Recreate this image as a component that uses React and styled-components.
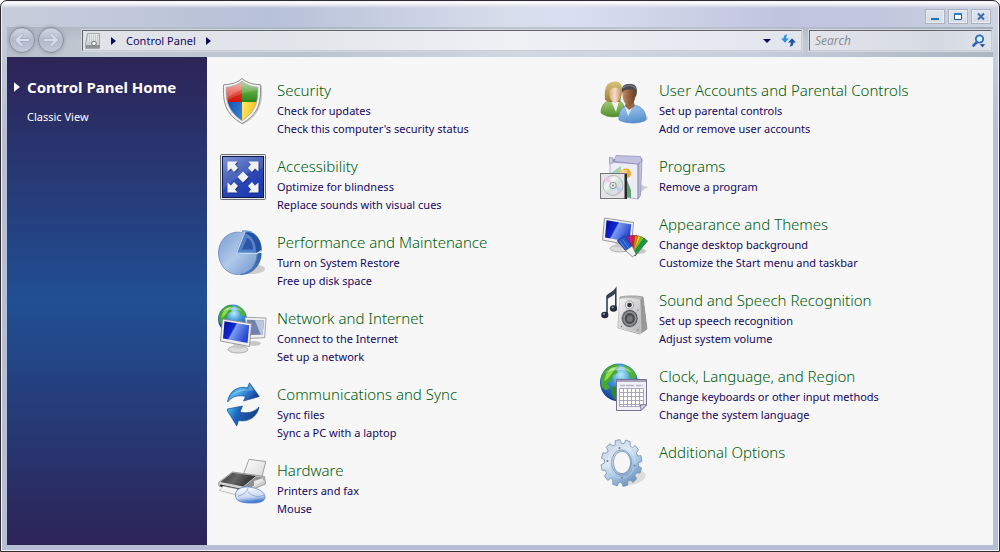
import styled, { createGlobalStyle, css } from 'styled-components';

const GlobalStyle = createGlobalStyle`
  * {
    box-sizing: border-box;
  }

  body {
    margin: 0;
    background: #fff;
    font-family: 'Noto Sans', 'Open Sans', sans-serif;
    font-size: 11px;
    color: #16085f;
  }

  a {
    color: inherit;
    text-decoration: none;
  }

  a:hover {
    text-decoration: underline;
  }

  button {
    padding: 0;
    border: none;
    background: none;
    font: inherit;
    color: inherit;
  }

  svg {
    display: block;
    flex: none;
  }
`;

//! Window frame
const Window = styled.div`
  min-height: 100vh;
  display: flex;
  flex-direction: column;
  padding: 0 6px 6px;
  border: 1px solid #2f2b30;
  border-radius: 7px 7px 0 0;
  box-shadow: inset 0 0 0 1px #f1f2f8;
  background:
    linear-gradient(#fff 1px, #e8e9f2 4px, rgba(232, 233, 242, 0) 7px),
    linear-gradient(rgba(181, 190, 212, 0) 26px, #b5bed4 130px),
    linear-gradient(
      90deg,
      #c8cddb,
      #b7c1d8 27%,
      #d6dcea 50%,
      #d9dff0 57%,
      #c1c4de 78%,
      #c2c6de 88%,
      #ccd5e2
    );
`;

const TitleBar = styled.header`
  display: flex;
  justify-content: flex-end;
  gap: 3px;
  height: 26px;
  padding: 8px 2px 0;
`;

const WindowButton = styled.button`
  display: flex;
  align-items: center;
  justify-content: center;
  width: 20px;
  height: 15px;
  border: 1px solid #abb1bf;
  background: linear-gradient(#dfe3ec, #d5dbe6);
  box-shadow: inset 0 0 0 1px #e9edf3;
`;

//! Navigation bar
const NavBar = styled.div`
  display: flex;
  align-items: flex-start;
  height: 30px;
  padding: 3px 1px 0 0;
  background:
    linear-gradient(rgba(150, 160, 175, 0.35), rgba(255, 255, 255, 0) 14px),
    linear-gradient(
      90deg,
      #b6bec9,
      #c2cad4 10%,
      #b9c3d0 30%,
      #d2d8e2 52%,
      #c9cede 75%,
      #abb5c2
    );
`;

const HistoryButtons = styled.div`
  display: flex;
  gap: 3px;
  width: 75px;
  margin-top: -3px;
  padding-left: 2px;
`;

const RoundButton = styled.button`
  display: flex;
  align-items: center;
  justify-content: center;
  width: 26px;
  height: 26px;
  border: 1px solid #858d9d;
  border-radius: 50%;
  background: linear-gradient(#d3d8e3, #b1b9cb 50%, #c3cad8);
  box-shadow:
    inset 0 0 0 1px #bdc5d5,
    0 0 3px 1px #a2a9b5;
`;

const field = css`
  display: flex;
  align-items: center;
  height: 21px;
  border: 1px solid;
  border-color: #62656c #c6cbd4 #c6cbd4 #62656c;
  outline: 1px solid #d3d8df;
`;

const AddressBar = styled.nav`
  ${field}
  flex: 1;
  gap: 10px;
  padding: 0 5px 0 2px;
  margin-right: 7px;
  background: linear-gradient(90deg, #dfe2e8, #e2e5ea 30%, #eff1f5 60%, #e2e5ec);
`;

const Spacer = styled.span`
  flex: 1;
`;

const Crumb = styled.a`
  line-height: 18px;
`;

const SearchBox = styled.form`
  ${field}
  width: 183px;
  padding: 0 5px;
  background: linear-gradient(90deg, #e3e5eb, #d6dae2 70%, #dde4ea);
`;

const SearchInput = styled.input`
  flex: 1;
  min-width: 0;
  padding: 0;
  border: none;
  outline: none;
  background: none;
  font: italic 12px 'Open Sans', sans-serif;
  color: #16085f;

  &::placeholder {
    color: #85888e;
    opacity: 1;
  }
`;

//! Body
const Body = styled.div`
  flex: 1;
  display: flex;
  background: #f7f7f7;
`;

const Sidebar = styled.aside`
  width: 200px;
  padding: 19px 7px;
  background: linear-gradient(#2d2457, #204f94 50%, #2d2457);
  color: #fff;
`;

const SideLink = styled.a`
  display: flex;
  align-items: center;
  gap: 7px;
  padding-left: ${(p) => (p.$current ? 0 : 13)}px;
  margin-bottom: 10px;
  font-size: ${(p) => (p.$current ? 15 : 11)}px;
  font-weight: ${(p) => (p.$current ? 700 : 400)};
  line-height: ${(p) => (p.$current ? 22 : 18)}px;
`;

const Main = styled.main`
  flex: 1;
  display: grid;
  grid-template-columns: repeat(2, minmax(0, 1fr));
  align-items: start;
  padding: 21px 11px 4px;
`;

const Column = styled.div`
  display: flex;
  flex-direction: column;
  gap: 10px;
`;

const CategoryRow = styled.section`
  display: flex;
  gap: 11px;
`;

const CategoryText = styled.div`
  min-width: 0;
  padding-bottom: 6px;
`;

const CategoryTitle = styled.h2`
  margin: 0;
  font-size: 15px;
  font-weight: 300;
  line-height: 24px;
  color: #005c0c;
`;

const TaskList = styled.ul`
  margin: 0;
  padding: 0;
  list-style: none;
  line-height: 18px;
`;

//! Icons
const IconFrame = ({ children }) => (
  <svg width="48" height="48" viewBox="0 0 48 48" overflow="visible" aria-hidden="true">
    {children}
  </svg>
);

const shieldPath = 'M24 3.2C19.500 7 14 9 8.200 9.200C7.600 22 9.500 33 24 42.800C38.500 33 40.400 22 39.800 9.200C34 9 28.500 7 24 3.200Z';

const ShieldIcon = () => (
  <IconFrame>
    <defs>
      <clipPath id="shieldClip">
        <path d={shieldPath} />
      </clipPath>
      <linearGradient id="shRed" x1="0" y1="0" x2="0" y2="1">
        <stop offset="0" stopColor="#f0a39b" />
        <stop offset="0.6" stopColor="#dd3324" />
        <stop offset="1" stopColor="#cf1208" />
      </linearGradient>
      <linearGradient id="shGreen" x1="0" y1="0" x2="0" y2="1">
        <stop offset="0" stopColor="#bfdcae" />
        <stop offset="0.5" stopColor="#5cab40" />
        <stop offset="1" stopColor="#2c8417" />
      </linearGradient>
      <linearGradient id="shBlue" x1="0" y1="0" x2="1" y2="0.5">
        <stop offset="0" stopColor="#1548a0" />
        <stop offset="1" stopColor="#2f7fd6" />
      </linearGradient>
      <linearGradient id="shYellow" x1="0" y1="0" x2="1" y2="0.3">
        <stop offset="0" stopColor="#ffe96a" />
        <stop offset="1" stopColor="#f3b70c" />
      </linearGradient>
    </defs>
    <path d="M25 1C20 5.500 13 7 6 7.500C5 23 7 37 25 46.500C43 37 45 23 44 7.500C37 7 30 5.500 25 1Z" fill="#000" opacity="0.18" />
    <path
      d="M24 0.500C19 5 12.500 6.500 5.700 6.700C4.500 23 7 36 24 45.500C41 36 43.500 23 42.300 6.700C35.500 6.500 29 5 24 0.500Z"
      fill="#f4f4f4"
      stroke="#8c8c8c"
    />
    <g clipPath="url(#shieldClip)">
      <path d="M5 2H24V24H5Z" fill="url(#shRed)" />
      <path d="M24 2H43V24H24Z" fill="url(#shGreen)" />
      <path d="M5 24H24V45H5Z" fill="url(#shBlue)" />
      <path d="M24 24H43V45H24Z" fill="url(#shYellow)" />
      <path d="M8 8L24 3V12C18 14 12 17 8 21Z" fill="#fff" opacity="0.3" />
      <path d="M8 20C14 15 24 13 24 12V3L40 8V12C30 14 16 16 8 24Z" fill="#fff" opacity="0.15" />
    </g>
    <path d={shieldPath} fill="none" stroke="#a8a8a8" strokeWidth="0.8" />
  </IconFrame>
);

const cornerArrow = 'M-15.500 -15.500H-5.500L-8 -12.500L-5 -9L-9 -5L-12 -8.500L-15.500 -5.500Z';

const AccessIcon = () => (
  <IconFrame>
    <defs>
      <linearGradient id="accBg" x1="0" y1="0" x2="0.600" y2="1">
        <stop offset="0" stopColor="#7089cf" />
        <stop offset="0.45" stopColor="#3452b2" />
        <stop offset="1" stopColor="#1c39b4" />
      </linearGradient>
    </defs>
    <rect x="2.500" y="0.500" width="45" height="45" rx="1" fill="#e6e6ea" stroke="#6f7076" />
    <rect x="4.500" y="2.500" width="41" height="41" fill="url(#accBg)" stroke="#10194e" />
    <path d="M5 3H45V14C32 16 16 24 5 36Z" fill="#fff" opacity="0.12" />
    <g fill="#121d5c" opacity="0.5" transform="translate(26 24)">
      <path d={cornerArrow} />
      <path d={cornerArrow} transform="scale(-1 1)" />
      <path d={cornerArrow} transform="scale(1 -1)" />
      <path d={cornerArrow} transform="scale(-1 -1)" />
      <path d="M0 -5.500L5.500 0L0 5.500L-5.500 0Z" />
    </g>
    <g fill="#f1f0f3" transform="translate(25 23)">
      <path d={cornerArrow} />
      <path d={cornerArrow} transform="scale(-1 1)" />
      <path d={cornerArrow} transform="scale(1 -1)" />
      <path d={cornerArrow} transform="scale(-1 -1)" />
      <path d="M0 -5.500L5.500 0L0 5.500L-5.500 0Z" />
    </g>
  </IconFrame>
);

const PieIcon = () => (
  <IconFrame>
    <defs>
      <linearGradient id="pieFace" x1="0" y1="0" x2="1" y2="1">
        <stop offset="0" stopColor="#7a9cd0" />
        <stop offset="0.5" stopColor="#b0c9ea" />
        <stop offset="1" stopColor="#6e94cd" />
      </linearGradient>
      <linearGradient id="pieSide" x1="0" y1="0" x2="0" y2="1">
        <stop offset="0" stopColor="#3263ae" />
        <stop offset="1" stopColor="#4a76b8" />
      </linearGradient>
    </defs>
    <ellipse cx="33" cy="39" rx="14" ry="5" fill="#555" opacity="0.25" />
    <path d="M18 23H43.500C44 34 35 45 22 45Z" fill="url(#pieSide)" />
    <path
      d="M18 23L26 3C11 -1 0.500 10 0.500 23C0.500 35 9 44.500 20 44.500C31 44.500 39 35 39 24Z"
      fill="url(#pieFace)"
      stroke="#5b83bf"
      strokeWidth="0.7"
    />
    <path d="M26 3L30 1C39 3 44 11 43.800 21L39 24L18 23.500Z" fill="#3565b4" />
    <path d="M20 22L28 3.500C35 6 38 12 38.500 22Z" fill="#5583cb" />
    <path d="M24 19.500L29 8C33 10 35 14 35 19.500Z" fill="#2b57a6" />
    <path d="M38 22C38 13 35 7 28.500 3.500L32 2C39 5 43 12 43 20.500Z" fill="#2450a0" />
    <path d="M24 1.300C28 0.500 31 1 34 2.500" fill="none" stroke="#6f97d4" strokeWidth="1.500" />
    <path d="M26.500 3L18.500 23L39 23.500L43.500 20.500" fill="none" stroke="#c6dcf6" strokeWidth="1.300" />
  </IconFrame>
);

const Globe = ({ id }) => (
  <>
    <defs>
      <radialGradient id={id} cx="0.550" cy="0.300" r="0.700">
        <stop offset="0" stopColor="#b8ecfb" />
        <stop offset="0.400" stopColor="#3f95d8" />
        <stop offset="1" stopColor="#123f96" />
      </radialGradient>
    </defs>
    <circle r="19" fill={`url(#${id})`} />
    <path d="M-15 -11C-11 -17 -6 -18 -2 -18.500L1 -15L-3 -13L-1 -10L-6 -7L-7 -2L-12 1L-9 5L-13 8L-17 5C-19 -1 -18 -6 -15 -11Z" fill="#46a832" />
    <path d="M-13 -8L-8 -14L-3 -15L-7 -9L-11 -4L-15 -1Z" fill="#8edb52" />
    <path d="M5 -17.500C10 -17 15 -12 17.500 -7L15 -3L11 -5L9 -10L6 -12Z" fill="#4eb13a" />
    <path d="M-7 5L0 3L7 8L5 14L0 18.500C-4 18 -6 15 -7 12Z" fill="#2b8a2a" />
    <path d="M-14 -9C-8 -18 6 -19 13 -10C6 -13 -6 -14 -14 -9Z" fill="#fff" opacity="0.4" />
  </>
);

const Monitor = ({ id }) => (
  <>
    <defs>
      <linearGradient id={id} x1="0" y1="0" x2="1" y2="0.450">
        <stop offset="0" stopColor="#060c86" />
        <stop offset="0.450" stopColor="#1029d8" />
        <stop offset="0.500" stopColor="#7d9cf0" />
        <stop offset="1" stopColor="#2747d4" />
      </linearGradient>
    </defs>
    <ellipse cx="18" cy="31" rx="10" ry="3.500" fill="#dcdcdc" stroke="#a3a3a3" strokeWidth="0.800" />
    <path d="M14 23L22 24L23 30H13Z" fill="#c9c9cb" />
    <path d="M2.500 0.500L31.500 5L29.500 28L0.500 22.500Z" fill="#efeff0" stroke="#8f9095" strokeWidth="0.900" />
    <path d="M4.500 2.800L29.200 6.700L27.600 24.500L3 20Z" fill={`url(#${id})`} />
  </>
);

const NetworkIcon = () => (
  <IconFrame>
    <g transform="translate(14.500 13) scale(0.760)">
      <Globe id="globeSmall" />
    </g>
    <g transform="translate(48 12) scale(-0.660 0.820)">
      <ellipse cx="18" cy="31" rx="10" ry="3" fill="#c8c8c8" />
      <path d="M0 0L32 -1L29 25L2 24Z" fill="#f0f0f2" stroke="#85868b" />
      <path d="M3 3L29 2L27 21L5 20Z" fill="#7183ad" />
      <path d="M3 3L17 2.500L8 20H5Z" fill="#b9c6e0" />
    </g>
    <g transform="translate(2 12.500)">
      <Monitor id="monitorNet" />
    </g>
  </IconFrame>
);

const SyncIcon = () => (
  <IconFrame>
    <defs>
      <linearGradient id="syncTop" x1="0" y1="0" x2="1" y2="0.500">
        <stop offset="0" stopColor="#2668ad" />
        <stop offset="0.450" stopColor="#4fb0ec" />
        <stop offset="0.700" stopColor="#2e7fd0" />
        <stop offset="1" stopColor="#103f9a" />
      </linearGradient>
      <linearGradient id="syncBottom" x1="0" y1="0" x2="1" y2="0.300">
        <stop offset="0" stopColor="#46c6f6" />
        <stop offset="0.400" stopColor="#1c62bb" />
        <stop offset="1" stopColor="#173f82" />
      </linearGradient>
    </defs>
    <g stroke="#1d4f97" strokeWidth="0.700" strokeLinejoin="round">
      <path d="M9.500 20C11 9 20 3.500 29.500 5.800L31.500 0.800L41.300 14.500L25.500 19L27.500 14.500C20 12.500 14 14.500 9.500 20Z" fill="url(#syncTop)" />
      <path d="M41 25C39.500 35 30 40.500 20.500 38.500L18.800 44L9.500 29L9.300 27L24.500 24L22 30C29 32 37 30 41 25Z" fill="url(#syncBottom)" />
    </g>
    <path d="M12 15C17 8 23 6.500 30.500 7.500L32 3.500L35.500 8.500C27 8 19 9 12 15Z" fill="#fff" opacity="0.25" />
  </IconFrame>
);

const PrinterIcon = () => (
  <IconFrame>
    <defs>
      <linearGradient id="prTop" x1="0" y1="0" x2="1" y2="0.300">
        <stop offset="0" stopColor="#333" />
        <stop offset="0.500" stopColor="#666" />
        <stop offset="1" stopColor="#2c2c2c" />
      </linearGradient>
      <linearGradient id="prPaper" x1="0" y1="0" x2="1" y2="1">
        <stop offset="0" stopColor="#fff" />
        <stop offset="1" stopColor="#d6d6d6" />
      </linearGradient>
      <linearGradient id="prMouse" x1="0" y1="0" x2="0.200" y2="1">
        <stop offset="0" stopColor="#ffffff" />
        <stop offset="0.700" stopColor="#c9d8f2" />
        <stop offset="1" stopColor="#3e78d2" />
      </linearGradient>
    </defs>
    <path d="M31 1.300L47.800 3.500L43.500 20L25.500 16Z" fill="url(#prPaper)" stroke="#8c8c8c" strokeWidth="0.800" />
    <path d="M0.500 24.500L14.500 14L46.500 18.500L47.500 26L26 35L1 28Z" fill="#d0d1d2" stroke="#77787a" strokeWidth="0.700" />
    <path d="M2.500 24L14.500 14.800L38 18L25 28.500Z" fill="url(#prTop)" />
    <path d="M25 29L38.500 18.500L45.500 19.500L46 21.500L29 31.500Z" fill="#8e9093" />
    <path d="M36 23L45 20V23L36 28Z" fill="#e6e6e6" />
    <path d="M2 26.500L24 31L23 33L2.500 28.500Z" fill="#1c1c1c" />
    <path d="M5 28L20 31L17 36.500L1.500 32.500Z" fill="#f5f5f5" stroke="#999" strokeWidth="0.600" />
    <path
      d="M17.500 37C17.500 31 24 28.500 31 29C40 30 47 34 47 39C47 44 40 45.500 32 45C23 45 17.500 43 17.500 37Z"
      fill="url(#prMouse)"
      stroke="#6186c4"
      strokeWidth="0.800"
    />
    <path d="M20 38C24 37 29 35 30 30M30 34C34 38 40 40 46 37" fill="none" stroke="#8ba2cd" strokeWidth="0.900" />
  </IconFrame>
);

const UsersIcon = () => (
  <IconFrame>
    <defs>
      <linearGradient id="usGreen" x1="0" y1="0" x2="0" y2="1">
        <stop offset="0" stopColor="#a9cd79" />
        <stop offset="1" stopColor="#4f8f2c" />
      </linearGradient>
      <linearGradient id="usBlue" x1="0" y1="0" x2="0.300" y2="1">
        <stop offset="0" stopColor="#a8cdf0" />
        <stop offset="1" stopColor="#5a93d0" />
      </linearGradient>
      <linearGradient id="usHair" x1="0" y1="0" x2="0" y2="1">
        <stop offset="0" stopColor="#d9c47c" />
        <stop offset="1" stopColor="#9a7c30" />
      </linearGradient>
      <linearGradient id="usFace" x1="0" y1="0" x2="1" y2="0">
        <stop offset="0" stopColor="#d9a982" />
        <stop offset="0.500" stopColor="#f6dcc6" />
        <stop offset="1" stopColor="#c99c77" />
      </linearGradient>
      <linearGradient id="usFaceDark" x1="0" y1="0" x2="1" y2="0">
        <stop offset="0" stopColor="#c48d66" />
        <stop offset="0.500" stopColor="#93603d" />
        <stop offset="1" stopColor="#6b4228" />
      </linearGradient>
    </defs>
    <ellipse cx="35" cy="40" rx="13" ry="5" fill="#666" opacity="0.25" />
    <path d="M1 35C1 27 5 23.500 11 22H18C23 24 25 28 25 36C18 40 7 40 1 35Z" fill="url(#usGreen)" stroke="#5e8c3b" strokeWidth="0.600" />
    <path d="M11 23L16 34L19 23Z" fill="#f3f3ee" />
    <path d="M5 22C5 16 3 4 15 3.500C21 3.500 23 8 22 15L20 24H9Z" fill="url(#usHair)" />
    <path d="M9 13C11 9 18 8 20.500 12C21 19 19 24 15 25C11 24 9 19 9 13Z" fill="url(#usFace)" />
    <path d="M19 42C18 33 22 29 28 27H35C42 29 46 33 46 42C40 46 26 46 19 42Z" fill="url(#usBlue)" stroke="#4c7db5" strokeWidth="0.600" />
    <path d="M25 28L28 38L33 28Z" fill="#e6f1fa" />
    <path d="M26 24H34L34.500 28.500L29 32L25 28Z" fill="#9a6742" />
    <path d="M22 14C21 8 25 5.500 30 6C36 5.500 38 10 36.500 17L34.500 20L24 16Z" fill="#4b4b4f" />
    <path d="M22.500 14C25 10.500 33 11 35.500 13C36 20 34 26 29.500 28C25 27 22 22 22.500 14Z" fill="url(#usFaceDark)" />
    <path d="M23 10C26 6.500 33 6.500 36 11" fill="none" stroke="#85858a" strokeWidth="1.200" />
  </IconFrame>
);

const ProgramsIcon = () => (
  <IconFrame>
    <defs>
      <linearGradient id="pgSide" x1="0" y1="0" x2="1" y2="0">
        <stop offset="0" stopColor="#a9a9cb" />
        <stop offset="1" stopColor="#d6d6ea" />
      </linearGradient>
      <linearGradient id="pgDisc" x1="0" y1="0" x2="1" y2="1">
        <stop offset="0" stopColor="#bdb7cf" />
        <stop offset="0.350" stopColor="#f6f6f6" />
        <stop offset="0.550" stopColor="#c9e2da" />
        <stop offset="0.750" stopColor="#ebd8ea" />
        <stop offset="1" stopColor="#a5adbb" />
      </linearGradient>
    </defs>
    <path d="M32 44L48 33L41 31Z" fill="#777" opacity="0.3" />
    <path d="M9.500 3L16 6L42 4L33 10L10 8Z" fill="#9d9dc4" />
    <path d="M10 8L38 10V45L10 41Z" fill="#ededf6" stroke="#9494bb" strokeWidth="0.700" />
    <path d="M38 10L42 4.500L40.500 41.500L38 45Z" fill="url(#pgSide)" stroke="#8787b2" strokeWidth="0.700" />
    <path d="M16 1.500L40.500 2.500L42 7L38 10L14 7.500Z" fill="#c2c2e0" stroke="#8a8ab4" strokeWidth="0.700" />
    <path d="M9.500 3L13 4V9L9.500 10Z" fill="#c7c7df" stroke="#8a8ab4" strokeWidth="0.500" />
    <path d="M11 19L21 12V20H11Z" fill="#a5d1b0" />
    <circle cx="26" cy="19.500" r="5" fill="#f0a928" />
    <path d="M20 16H27V24H20Z" fill="#f4cf86" />
    <path d="M27 26L31 36V44L27 43Z" fill="#5ba274" />
    <rect x="0.500" y="19.500" width="26" height="25" fill="#e4e4e6" stroke="#77777a" />
    <path d="M24.500 20H27V45H24.500Z" fill="#29292b" />
    <circle cx="13" cy="31.500" r="10" fill="url(#pgDisc)" stroke="#9a9a9e" strokeWidth="0.600" />
    <path d="M13 31.500L4.500 25L8 22.500Z" fill="#f1c9e6" />
    <path d="M13 31.500L22 34L20 39Z" fill="#b3d6ee" />
    <circle cx="13" cy="31.500" r="3.200" fill="#ececec" stroke="#88888c" strokeWidth="0.900" />
    <circle cx="13" cy="31.500" r="1" fill="#77777a" />
  </IconFrame>
);

const swatches = ['#1c2fa8', '#6a29a8', '#b01ca0', '#e0189a', '#e0202c', '#f07a1a', '#f2d31c', '#7ccf2a', '#169a3c'];

const ThemesIcon = () => (
  <IconFrame>
    <g transform="translate(2 5.500)">
      <Monitor id="monitorTheme" />
    </g>
    <ellipse cx="38" cy="39" rx="8" ry="3" fill="#555" opacity="0.3" />
    {swatches.map((color, i) => (
      <path
        key={color}
        d="M-1.500 0L-2.500 -19.500H2.500L1.500 0Z"
        transform={`translate(34 43) rotate(${i * 9 - 35})`}
        fill={color}
        stroke="#2b2238"
        strokeWidth="0.300"
      />
    ))}
    <g transform="translate(33 42) rotate(-36)">
      <path d="M-4 -7L-5 -20H4L4 -7Z" fill="#2556c8" stroke="#152f83" strokeWidth="0.600" />
      <path d="M-3 -18V-8M0 -18V-8" stroke="#6f9bf0" strokeWidth="0.700" />
      <path d="M-4 -7H4L2.500 2H-2Z" fill="#f1f1f4" stroke="#77777f" strokeWidth="0.700" />
    </g>
  </IconFrame>
);

const SoundIcon = () => (
  <IconFrame>
    <defs>
      <linearGradient id="spFace" x1="0" y1="0" x2="1" y2="1">
        <stop offset="0" stopColor="#f2f2f2" />
        <stop offset="1" stopColor="#b4b4b6" />
      </linearGradient>
      <radialGradient id="spCone">
        <stop offset="0" stopColor="#9d9da1" />
        <stop offset="0.450" stopColor="#45464a" />
        <stop offset="0.800" stopColor="#77787c" />
        <stop offset="1" stopColor="#2b2b2e" />
      </radialGradient>
    </defs>
    <path d="M7 26.500V8C10 5 14 4 15.800 1V20" fill="none" stroke="#2c3443" strokeWidth="1.500" />
    <path d="M7 8C10 5 14 4 15.800 0.500V5C13 8 10 9 7 11.500Z" fill="#3a4356" />
    <ellipse cx="4.800" cy="27" rx="3.600" ry="3.200" fill="#252b3a" />
    <ellipse cx="13.500" cy="20.500" rx="3.600" ry="3.200" fill="#252b3a" />
    <ellipse cx="4" cy="26" rx="1.200" ry="1" fill="#8f9bb5" />
    <ellipse cx="12.700" cy="19.500" rx="1.200" ry="1" fill="#8f9bb5" />
    <path d="M20 9C27 7.500 37 7.500 43 9L47 41L40 46L18 40Z" fill="#b9b9bb" stroke="#8a8a8c" strokeWidth="0.700" />
    <path d="M43 9L47 41L40 46L40 12Z" fill="#98989b" />
    <path d="M19.500 11C25 9.500 34 10 40 12L41 45.500L18.500 40Z" fill="url(#spFace)" stroke="#d8d8d8" strokeWidth="0.600" />
    <circle cx="29.500" cy="17" r="4.200" fill="#e2e2e3" stroke="#929295" strokeWidth="0.800" />
    <circle cx="29.500" cy="17" r="2.300" fill="#333338" />
    <ellipse cx="29.800" cy="30.500" rx="8.300" ry="9" fill="url(#spCone)" stroke="#d9d9da" strokeWidth="0.700" />
    <ellipse cx="29.800" cy="30.500" rx="5.800" ry="6.300" fill="none" stroke="#a8a8ac" strokeWidth="0.800" />
    <circle cx="29.800" cy="31" r="3" fill="#747479" />
    <g fill="#6d6d70">
      <circle cx="21.500" cy="38.500" r="0.700" />
      <circle cx="38" cy="42" r="0.700" />
      <circle cx="38" cy="22" r="0.700" />
    </g>
  </IconFrame>
);

const ClockIcon = () => (
  <IconFrame>
    <g transform="translate(19 18.500)">
      <Globe id="globeLarge" />
    </g>
    <path d="M16.500 15.500H46.500V41L41 46.500H16.500Z" fill="#f1f0f6" stroke="#75718f" />
    <path d="M17 16H46V18H17Z" fill="#a5a2ba" />
    <path d="M20 21.500H43" stroke="#b6b4c4" strokeWidth="1.500" strokeDasharray="5 1 8 2" />
    <path d="M19 24.500H44V43H19Z" fill="#fff" />
    <path
      d="M19.500 24.500H43.500V42.500H19.500ZM23.500 24.500V42.500M27.500 24.500V42.500M31.500 24.500V42.500M35.500 24.500V42.500M39.500 24.500V42.500M19.500 28.500H43.500M19.500 32.500H43.500M19.500 36.500H43.500M19.500 40.500H43.500"
      fill="none"
      stroke="#a19eb4"
      strokeWidth="0.900"
    />
    <path d="M46.500 40.500L41 46.500L40.500 41Z" fill="#dcdaea" stroke="#75718f" strokeWidth="0.900" />
  </IconFrame>
);

const TEETH = 12;
const toothProfile = [
  [0, 0.84],
  [0.3, 0.84],
  [0.4, 1],
  [0.85, 1],
];
const gearPath = Array.from({ length: TEETH * 4 }, (_, i) => {
  const [offset, r] = toothProfile[i % 4];
  const angle = ((Math.floor(i / 4) + offset) * Math.PI * 2) / TEETH;
  const x = 21.5 + Math.cos(angle) * 20.5 * r;
  const y = 23 + Math.sin(angle) * 23.5 * r;
  return `${i ? 'L' : 'M'}${x.toFixed(1)} ${y.toFixed(1)}`;
}).join('');

const GearIcon = () => (
  <IconFrame>
    <defs>
      <linearGradient id="gearFill" x1="0" y1="0" x2="0.600" y2="1">
        <stop offset="0" stopColor="#bfccdd" />
        <stop offset="0.450" stopColor="#dbe6f3" />
        <stop offset="0.700" stopColor="#a9c8e6" />
        <stop offset="1" stopColor="#6f94bd" />
      </linearGradient>
    </defs>
    <path d="M22 45C34 46 46 42 46 34L38 28Z" fill="#777" opacity="0.2" />
    <path
      d={`${gearPath}ZM22 11.500C17 11.500 13.500 16.500 13.500 22.500C13.500 28.500 17 33.500 22 33.500C27 33.500 30.500 28.500 30.500 22.500C30.500 16.500 27 11.500 22 11.500Z`}
      fill="url(#gearFill)"
      fillRule="evenodd"
      stroke="#7c97b6"
      strokeWidth="0.900"
      strokeLinejoin="round"
    />
    <ellipse cx="21.500" cy="22.500" rx="10" ry="12.500" fill="none" stroke="#7f9dbf" strokeWidth="1" />
    <ellipse cx="21.500" cy="22.500" rx="13.500" ry="16" fill="none" stroke="#fff" strokeWidth="1" opacity="0.300" />
    <g fill="#6a83a0">
      <circle cx="19.500" cy="8" r="1" />
      <circle cx="34.500" cy="25.500" r="1" />
      <circle cx="7.500" cy="21" r="1" />
      <circle cx="22" cy="38" r="1" />
    </g>
  </IconFrame>
);

const Triangle = ({ down, color = '#0b0b5c', size = 5 }) => (
  <svg width={down ? 8 : size} height={down ? 4 : size * 2 - 2} viewBox={down ? '0 0 8 4' : '0 0 5 8'} aria-hidden="true">
    <path d={down ? 'M0 0H8L4 4Z' : 'M0 0L5 4L0 8Z'} fill={color} />
  </svg>
);

const HistoryArrow = ({ flip }) => (
  <svg width="18" height="18" viewBox="0 0 18 18" aria-hidden="true">
    <path
      d="M1.500 9L8.500 2L10.500 4L7 7.500H16.500V10.500H7L10.500 14L8.500 16Z"
      transform={flip ? 'translate(18 0) scale(-1 1)' : undefined}
      fill="#d6dce9"
      stroke="#a0a9bb"
      strokeWidth="0.700"
    />
  </svg>
);

const LocationIcon = () => (
  <svg width="16" height="16" viewBox="0 0 16 16" aria-hidden="true">
    <path d="M2.500 0.500H14.500V15.500H0.500V11Z" fill="#cfd2d4" stroke="#a3a8aa" />
    <path d="M3.500 1H13.500V8H3Z" fill="#e3e8e9" />
    <path d="M4 3H13M4 5H13M4 7H13" stroke="#a3a9ab" strokeDasharray="1 1" />
    <path d="M1 12H15V15H1Z" fill="#8e9496" />
    <circle cx="9" cy="10.500" r="2.300" fill="#eef0f0" stroke="#6f7577" />
  </svg>
);

const RefreshIcon = () => (
  <svg width="15" height="13" viewBox="0 0 15 13" aria-hidden="true">
    <path d="M6.500 0.300C3.500 0.500 2.500 2 2.500 4.500H0L4 8.800L8 4.500H5.300C5.200 2.500 5.500 1.500 6.500 0.300Z" fill="#2f93da" />
    <path d="M8.500 12.800C11.500 12.500 12.500 11 12.500 8.500H15L11 4.200L7 8.500H9.700C9.800 10.500 9.500 11.500 8.500 12.800Z" fill="#2553a8" />
  </svg>
);

const SearchIcon = () => (
  <svg width="14" height="14" viewBox="0 0 14 14" aria-hidden="true">
    <path d="M1.500 11.500L5 8" stroke="#3262b0" strokeWidth="2.600" strokeLinecap="round" />
    <circle cx="7.500" cy="5" r="3.700" fill="#d7ecf8" stroke="#2f6cbc" strokeWidth="1.800" />
    <path d="M7.500 10H13.500L10.500 13.500Z" fill="#17418f" stroke="#dfe6ee" strokeWidth="0.500" />
  </svg>
);

const MinimizeIcon = () => (
  <svg width="10" height="9" viewBox="0 0 10 9" aria-hidden="true">
    <path d="M1 6H9V8H1Z" fill="#1f74b4" />
  </svg>
);

const MaximizeIcon = () => (
  <svg width="10" height="9" viewBox="0 0 10 9" aria-hidden="true">
    <path d="M1.500 1.500H8.500V7.500H1.500Z" fill="#fff" stroke="#24599f" />
    <path d="M1 1H9V3H1Z" fill="#2a7cc0" />
  </svg>
);

const CloseIcon = () => (
  <svg width="10" height="9" viewBox="0 0 10 9" aria-hidden="true">
    <path d="M2 1.500L8 7.500M8 1.500L2 7.500" stroke="#3a6ea8" strokeWidth="1.900" />
  </svg>
);

const columns = [
  [
    { title: 'Security', Icon: ShieldIcon, tasks: ['Check for updates', "Check this computer's security status"] },
    { title: 'Accessibility', Icon: AccessIcon, tasks: ['Optimize for blindness', 'Replace sounds with visual cues'] },
    { title: 'Performance and Maintenance', Icon: PieIcon, tasks: ['Turn on System Restore', 'Free up disk space'] },
    { title: 'Network and Internet', Icon: NetworkIcon, tasks: ['Connect to the Internet', 'Set up a network'] },
    { title: 'Communications and Sync', Icon: SyncIcon, tasks: ['Sync files', 'Sync a PC with a laptop'] },
    { title: 'Hardware', Icon: PrinterIcon, tasks: ['Printers and fax', 'Mouse'] },
  ],
  [
    { title: 'User Accounts and Parental Controls', Icon: UsersIcon, tasks: ['Set up parental controls', 'Add or remove user accounts'] },
    { title: 'Programs', Icon: ProgramsIcon, tasks: ['Remove a program'] },
    { title: 'Appearance and Themes', Icon: ThemesIcon, tasks: ['Change desktop background', 'Customize the Start menu and taskbar'] },
    { title: 'Sound and Speech Recognition', Icon: SoundIcon, tasks: ['Set up speech recognition', 'Adjust system volume'] },
    { title: 'Clock, Language, and Region', Icon: ClockIcon, tasks: ['Change keyboards or other input methods', 'Change the system language'] },
    { title: 'Additional Options', Icon: GearIcon, tasks: [] },
  ],
];

const Category = ({ title, Icon, tasks }) => {
  return (
    <CategoryRow>
      <Icon />
      <CategoryText>
        <CategoryTitle>
          <a href="#">{title}</a>
        </CategoryTitle>
        {tasks.length > 0 && (
          <TaskList>
            {tasks.map((task) => (
              <li key={task}>
                <a href="#">{task}</a>
              </li>
            ))}
          </TaskList>
        )}
      </CategoryText>
    </CategoryRow>
  );
};

const App = () => {
  return (
    <>
      <GlobalStyle />
      <Window>
        <TitleBar>
          <WindowButton aria-label="Minimize">
            <MinimizeIcon />
          </WindowButton>
          <WindowButton aria-label="Maximize">
            <MaximizeIcon />
          </WindowButton>
          <WindowButton aria-label="Close">
            <CloseIcon />
          </WindowButton>
        </TitleBar>
        <NavBar>
          <HistoryButtons>
            <RoundButton aria-label="Back">
              <HistoryArrow />
            </RoundButton>
            <RoundButton aria-label="Forward">
              <HistoryArrow flip />
            </RoundButton>
          </HistoryButtons>
          <AddressBar aria-label="Address">
            <LocationIcon />
            <Triangle />
            <Crumb href="#">Control Panel</Crumb>
            <Triangle />
            <Spacer />
            <button aria-label="Previous locations">
              <Triangle down />
            </button>
            <button aria-label="Refresh">
              <RefreshIcon />
            </button>
          </AddressBar>
          <SearchBox>
            <SearchInput type="text" placeholder="Search" aria-label="Search" />
            <button type="button" aria-label="Go">
              <SearchIcon />
            </button>
          </SearchBox>
        </NavBar>
        <Body>
          <Sidebar>
            <SideLink href="#" $current>
              <Triangle color="#fff" size={6} />
              Control Panel Home
            </SideLink>
            <SideLink href="#">Classic View</SideLink>
          </Sidebar>
          <Main>
            {columns.map((items, i) => (
              <Column key={i}>
                {items.map((item) => (
                  <Category key={item.title} {...item} />
                ))}
              </Column>
            ))}
          </Main>
        </Body>
      </Window>
    </>
  );
};

export default App;
